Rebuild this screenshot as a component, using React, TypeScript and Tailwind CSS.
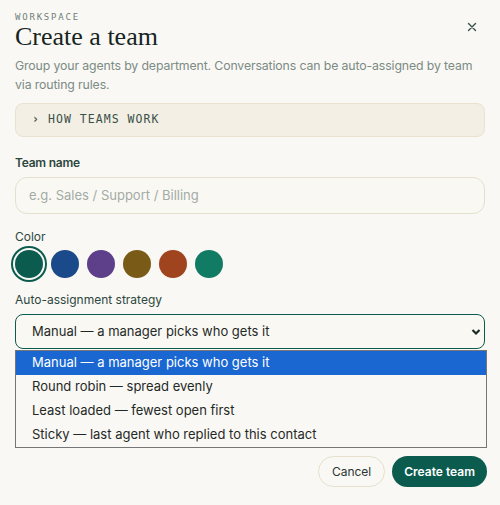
import React from "react";

const swatches = ["#0b5c4f", "#1a4a8a", "#5d3f8a", "#7a5a17", "#a0431f", "#117b64"];
const options = [
  "Manual — a manager picks who gets it",
  "Round robin — spread evenly",
  "Least loaded — fewest open first",
  "Sticky — last agent who replied to this contact",
];

export default function App() {
  return (
    <div className="w-[500px] h-[505px] bg-[#faf8f4] relative overflow-hidden text-[#1c2b27]" style={{ fontFamily: "Inter, 'Noto Sans', sans-serif" }}>
      <div className="px-[15px] pt-[11px]">
        <div className="flex items-start justify-between h-[12px]">
          <div className="text-[9px] tracking-[0.2em] text-[#6f7f79] leading-[12px]" style={{ fontFamily: "'DejaVu Sans Mono', monospace" }}>WORKSPACE</div>
          <button className="mr-[8px] mt-[11px] text-[#35524a]">
            <svg width="10" height="10" viewBox="0 0 10 10"><path d="M1.5 1.5L8.5 8.5M8.5 1.5L1.5 8.5" stroke="currentColor" strokeWidth="1.4" strokeLinecap="round" /></svg>
          </button>
        </div>
        <h1 className="text-[26px] leading-[28px] text-[#16241f]" style={{ fontFamily: "'Liberation Serif', serif" }}>Create a team</h1>
        <p className="mt-[5px] text-[12.3px] leading-[19px] text-[#7b8b85] tracking-[-0.01em]">Group your agents by department. Conversations can be auto-assigned by team via routing rules.</p>
        <div className="mt-[9px] h-[34px] rounded-lg bg-[#f3efe5] border border-[#e9e2d1] flex items-center px-[16px] text-[11.5px] tracking-[0.09em] text-[#3a4f48]" style={{ fontFamily: "'DejaVu Sans Mono', monospace" }}>
          <span className="mr-[8px] font-bold">›</span>HOW TEAMS WORK
        </div>
        <div className="mt-[17px] text-[12px] font-semibold text-[#2c4740] tracking-[-0.02em]">Team name</div>
        <div className="mt-[5px] h-[37px] rounded-xl border border-[#e6dfcd] bg-[#faf8f3] flex items-center px-[13px] text-[13px] text-[#a3aba6]">e.g. Sales / Support / Billing</div>
        <div className="mt-[14px] text-[12px] text-[#2c4740]">Color</div>
        <div className="mt-[4px] flex items-center gap-[8px]">
          {swatches.map((c, i) => (
            <div
              key={c}
              className={"w-[28px] h-[28px] rounded-full " + (i === 0 ? "shadow-[0_0_0_2px_#faf8f4,0_0_0_4px_#0b5c4f]" : "")}
              style={{ backgroundColor: c }}
            />
          ))}
        </div>
        <div className="mt-[13px] text-[12px] text-[#2c4740]">Auto-assignment strategy</div>
        <div className="mt-[5px] h-[35px] rounded-lg border border-[#0b5c4f] bg-[#faf8f3] flex items-center text-[13px] text-[#1f2a27]">
          <span className="ml-[16px] flex-1">{options[0]}</span>
          <svg className="mr-[3px]" width="10" height="8" viewBox="0 0 10 8"><path d="M1.5 2L5 5.5L8.5 2" stroke="#1a2a25" strokeWidth="2.2" fill="none" /></svg>
        </div>
      </div>
      <div className="absolute left-[15px] top-[350px] w-[472px] border border-[#767676] bg-[#faf8f4]">
        {options.map((o, i) => (
          <div key={o} className={"h-[24px] flex items-center pl-[16px] text-[13px] " + (i === 0 ? "bg-[#1a67d2] text-white" : "text-[#1f2a27]")}>{o}</div>
        ))}
      </div>
      <div className="absolute right-[13px] bottom-[18px] flex gap-[7px]">
        <button className="h-[31px] px-[13px] rounded-full border border-[#e6dfcd] text-[12px] text-[#2a3532]">Cancel</button>
        <button className="h-[31px] px-[12px] rounded-full bg-[#0b5c4f] text-white text-[12px] font-semibold">Create team</button>
      </div>
    </div>
  );
}
